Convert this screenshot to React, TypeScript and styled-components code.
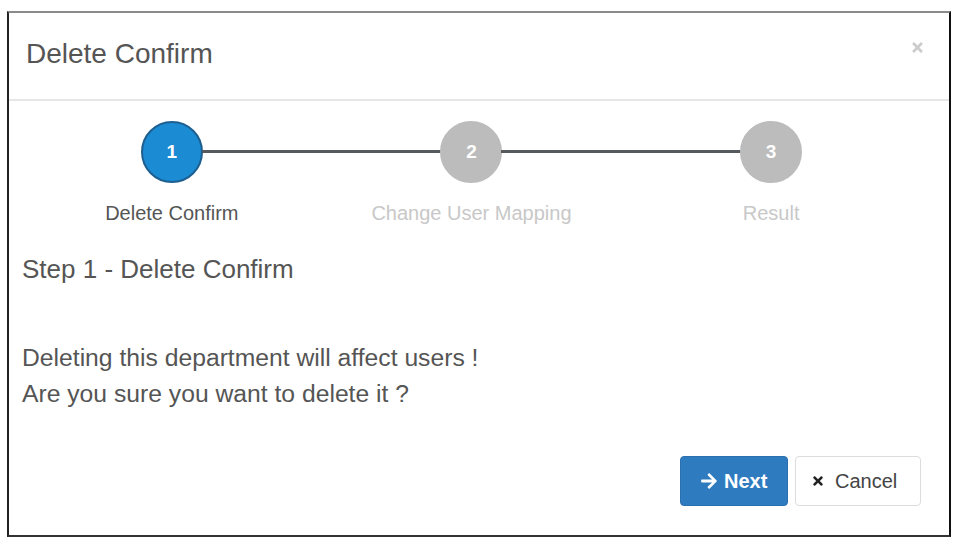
import { FC } from 'react';
import styled, { createGlobalStyle } from 'styled-components';
import { FaArrowRight, FaTimes } from 'react-icons/fa';

const GlobalStyle = createGlobalStyle`
	html, body {
		margin: 0;
		padding: 0;
		background: #ffffff;
	}
	body {
		font-family: 'Liberation Sans', Arial, Helvetica, sans-serif;
		color: #555555;
	}
`;

type Step = {
	label: string;
};

const STEPS: Step[] = [
	{ label: 'Delete Confirm' },
	{ label: 'Change User Mapping' },
	{ label: 'Result' },
];

const CURRENT_STEP = 0;

const App: FC = () => (
	<>
		<GlobalStyle />
		<Frame>
			<Header>
				<Title>Delete Confirm</Title>
				<CloseButton aria-label="close">
					<FaTimes />
				</CloseButton>
			</Header>
			<Body>
				<Stepper>
					{STEPS.map((step, i) => (
						<StepItem key={step.label} $hasLine={i < STEPS.length - 1}>
							<StepCircle $active={i === CURRENT_STEP}>{i + 1}</StepCircle>
							<StepLabel $active={i === CURRENT_STEP}>{step.label}</StepLabel>
						</StepItem>
					))}
				</Stepper>
				<StepHeading>Step 1 - Delete Confirm</StepHeading>
				<Message>
					Deleting this department will affect users !
					<br />
					Are you sure you want to delete it ?
				</Message>
				<Footer>
					<PrimaryButton>
						<FaArrowRight />
						Next
					</PrimaryButton>
					<DefaultButton>
						<FaTimes />
						Cancel
					</DefaultButton>
				</Footer>
			</Body>
		</Frame>
	</>
);

const Frame = styled.div`
	width: 940px;
	margin: 11px 0 0 7px;
	background: #ffffff;
	border-top: 2px solid #8a8a8a;
	border-left: 2px solid #222222;
	border-right: 2px solid #111111;
	border-bottom: 2px solid #333333;
`;

const Header = styled.div`
	height: 88px;
	display: flex;
	align-items: center;
	justify-content: space-between;
	padding: 0 24px 0 17px;
	border-bottom: 2px solid #e6e6e6;
	box-sizing: border-box;
`;

const Title = styled.h4`
	margin: 0;
	font-size: 28px;
	font-weight: normal;
	color: #555555;
	position: relative;
	top: -2px;
`;

const CloseButton = styled.button`
	border: none;
	background: transparent;
	padding: 0;
	color: #cccccc;
	font-size: 15px;
	display: flex;
	position: relative;
	top: -9px;
	cursor: pointer;
`;

const Body = styled.div`
	padding: 0 28px 29px 13px;
`;

const Stepper = styled.div`
	display: grid;
	grid-template-columns: repeat(3, 1fr);
	margin-top: 20px;
`;

const StepItem = styled.div<{ $hasLine: boolean }>`
	position: relative;
	display: flex;
	flex-direction: column;
	align-items: center;

	&::after {
		content: '';
		display: ${(p) => (p.$hasLine ? 'block' : 'none')};
		position: absolute;
		top: 29px;
		left: calc(50% + 30px);
		width: calc(100% - 60px);
		height: 3px;
		background: #555a5f;
	}
`;

const StepCircle = styled.div<{ $active: boolean }>`
	width: 62px;
	height: 62px;
	box-sizing: border-box;
	border-radius: 50%;
	display: flex;
	align-items: center;
	justify-content: center;
	font-size: 19px;
	font-weight: bold;
	color: #ffffff;
	background: ${(p) => (p.$active ? '#1b8bd3' : '#bcbcbc')};
	border: 2px solid ${(p) => (p.$active ? '#1d5f90' : '#bcbcbc')};
`;

const StepLabel = styled.div<{ $active: boolean }>`
	margin-top: 18px;
	font-size: 20px;
	line-height: 24px;
	color: ${(p) => (p.$active ? '#555555' : '#c8c8c8')};
`;

const StepHeading = styled.h3`
	margin: 29px 0 0;
	font-size: 26px;
	line-height: 30px;
	font-weight: normal;
	color: #555555;
`;

const Message = styled.p`
	margin: 56px 0 0;
	font-size: 24.7px;
	line-height: 36px;
	color: #555555;
`;

const Footer = styled.div`
	display: flex;
	justify-content: flex-end;
	gap: 7px;
	margin-top: 44px;
`;

const BaseButton = styled.button`
	height: 50px;
	display: inline-flex;
	align-items: center;
	border-radius: 4px;
	font-family: 'Liberation Sans', Arial, Helvetica, sans-serif;
	font-size: 20px;
	cursor: pointer;
	box-sizing: border-box;
`;

const PrimaryButton = styled(BaseButton)`
	width: 108px;
	padding: 0 0 0 19px;
	gap: 6px;
	background: #2f7bbf;
	border: 1px solid #2a6fae;
	color: #ffffff;
	font-weight: bold;

	svg {
		font-size: 18px;
	}
`;

const DefaultButton = styled(BaseButton)`
	width: 126px;
	padding: 0 0 0 15px;
	gap: 10px;
	background: #ffffff;
	border: 1px solid #dcdcdc;
	color: #444444;

	svg {
		font-size: 14px;
		color: #222222;
	}
`;

export default App;
